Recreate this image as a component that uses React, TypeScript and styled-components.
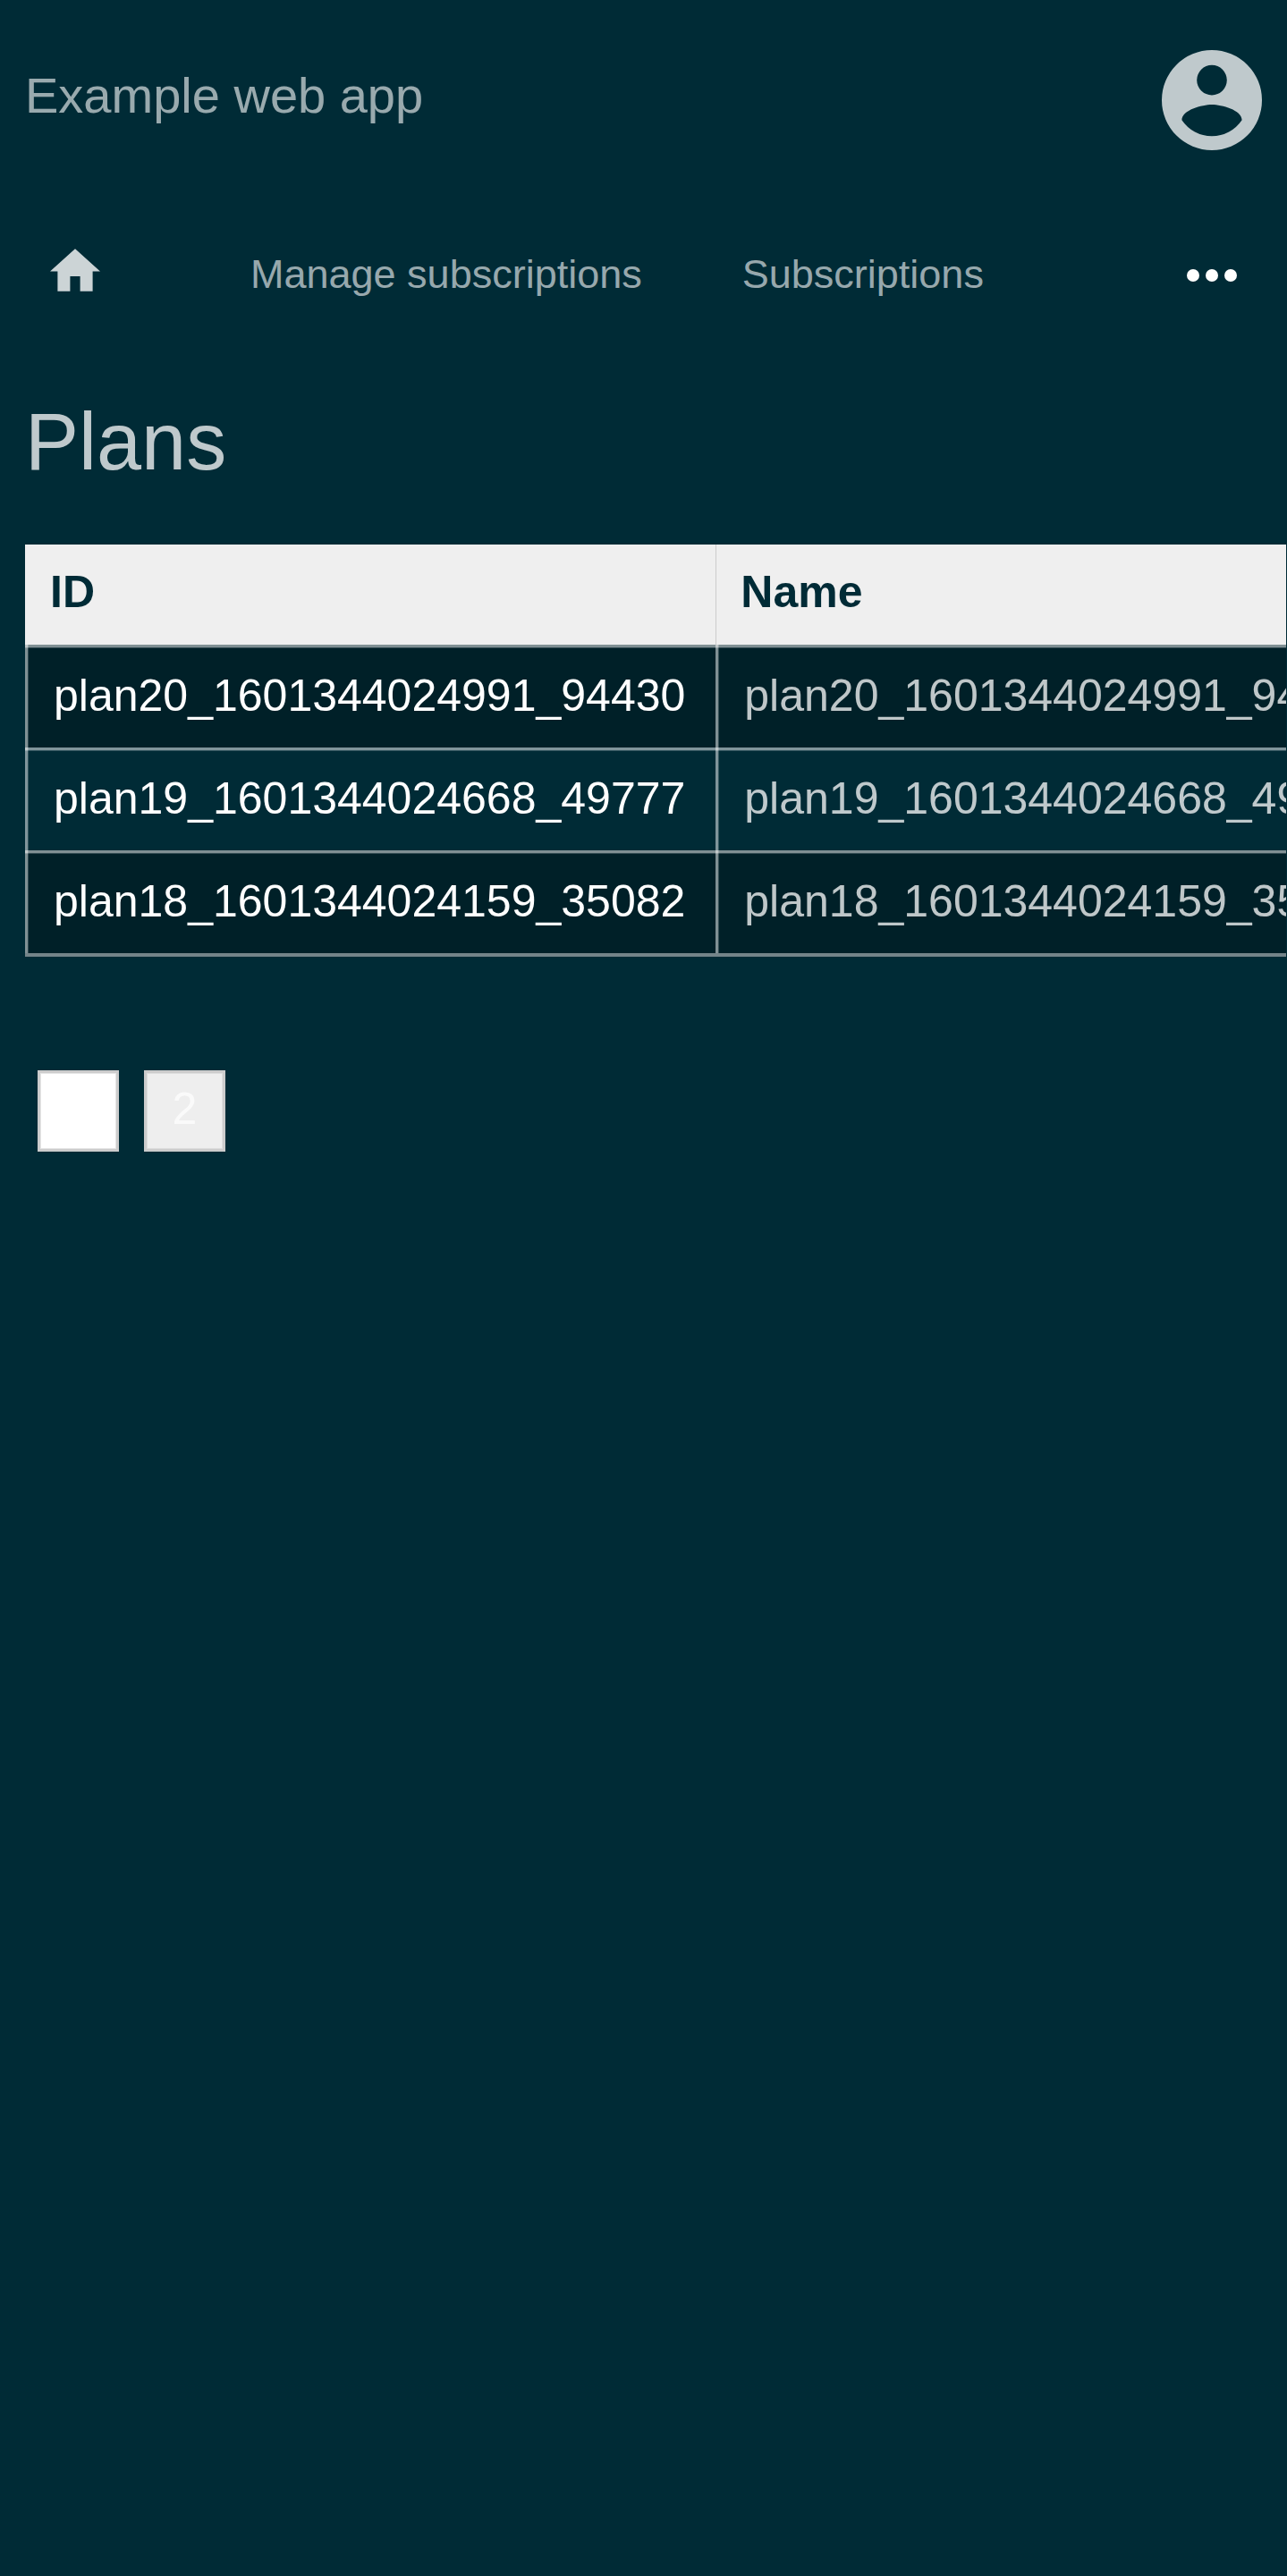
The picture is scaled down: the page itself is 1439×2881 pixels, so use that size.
import React from "react";
import styled, { createGlobalStyle } from "styled-components";

const GlobalStyle = createGlobalStyle`
  *, *::before, *::after { box-sizing: border-box; }
  body {
    margin: 0;
    background: #002b36;
    color: rgba(255, 255, 255, 0.75);
    font-family: "Liberation Sans", Arial, sans-serif;
    font-size: 50px;
  }
`;

const Page = styled.div`
  min-height: 100vh;
  overflow: hidden;
`;

const Header = styled.header`
  display: flex;
  align-items: center;
  justify-content: space-between;
  padding: 56px 28px;
`;

const SiteTitle = styled.a`
  padding-bottom: 10px;
  color: rgba(255, 255, 255, 0.6);
  font-size: 56px;
  line-height: 64px;
  text-decoration: none;
`;

const IconButton = styled.button`
  display: block;
  padding: 0;
  border: 0;
  background: none;
  color: inherit;
  cursor: pointer;

  svg { display: block; }
`;

const Nav = styled.nav`
  display: flex;
  align-items: center;
  height: 112px;
  margin-top: 28px;
  padding-right: 56px;
`;

const HomeLink = styled.a`
  width: 224px;
  padding: 0 56px 12px;
  color: rgba(255, 255, 255, 0.8);

  svg { display: block; }
`;

const NavLink = styled.a`
  padding: 0 56px 2px;
  color: rgba(255, 255, 255, 0.6);
  font-size: 45px;
  line-height: 52px;
  text-decoration: none;
  white-space: nowrap;
`;

const MoreButton = styled(IconButton)`
  margin-left: auto;
  color: #fff;
`;

const Main = styled.main`
  padding: 78px 1px 28px 28px;
`;

const Heading = styled.h1`
  margin: 0 0 63px;
  font-size: 90px;
  font-weight: 400;
  line-height: 104px;
`;

const TableScroll = styled.div`
  overflow: hidden;
`;

const Table = styled.table`
  border-spacing: 0;
  line-height: 56px;
  text-align: left;
  white-space: nowrap;
`;

const HeadCell = styled.th`
  padding: 25px 28px 31px;
  background: #efefef;
  color: #002b36;
  font-weight: 700;

  & + & { box-shadow: inset 1px 0 #ccc; }
`;

const Row = styled.tr`
  &:nth-child(odd) { background: rgba(0, 0, 0, 0.25); }
`;

/* Each grid line is a 3px bright stroke with a faint 1px inner edge;
   separate shadows let crossings add up to a brighter joint. */
const Cell = styled.td`
  padding: 29px 34px 30px 32px;
  box-shadow:
    inset 3px 0 rgba(255, 255, 255, 0.38),
    inset 4px 0 rgba(255, 255, 255, 0.2),
    inset 0 3px rgba(255, 255, 255, 0.38),
    inset 0 4px rgba(255, 255, 255, 0.2);

  tr:last-child > & { border-bottom: 4px solid rgba(255, 255, 255, 0.45); }
`;

const PlanLink = styled.a`
  color: #fff;
  text-decoration: none;
`;

const Pagination = styled.nav`
  display: flex;
  gap: 28px;
  margin-top: 127px;
  padding-left: 14px;
`;

const PageLink = styled.a<{ $current?: boolean }>`
  width: 91px;
  height: 91px;
  border: 3px solid #ccc;
  box-shadow: inset 0 0 0 1px rgba(204, 204, 204, 0.5);
  background: ${(p) => (p.$current ? "#fff" : "#eee")};
  color: ${(p) => (p.$current ? "#fff" : "#fafafa")};
  line-height: 80px;
  text-align: center;
  text-decoration: none;
`;

const plans = [
  "plan20_1601344024991_94430",
  "plan19_1601344024668_49777",
  "plan18_1601344024159_35082",
];

const HomeIcon = () => (
  <svg width="56" height="48" viewBox="2 3 20 17" fill="currentColor" aria-hidden="true">
    <path d="M10 20v-6h4v6h5v-8h3L12 3 2 12h3v8z" />
  </svg>
);

const AccountIcon = () => (
  <svg width="112" height="112" viewBox="0 0 20 20" fill="currentColor" aria-hidden="true">
    <path d="M10 0a10 10 0 1 0 0 20 10 10 0 0 0 0-20zm0 3a3 3 0 1 1 0 6 3 3 0 0 1 0-6zm0 14.2a7.2 7.2 0 0 1-6-3.22c.03-1.99 4-3.08 6-3.08s5.97 1.09 6 3.08a7.2 7.2 0 0 1-6 3.22z" />
  </svg>
);

const MoreIcon = () => (
  <svg width="56" height="14" viewBox="0 0 16 4" fill="currentColor" aria-hidden="true">
    <circle cx="2" cy="2" r="2" />
    <circle cx="8" cy="2" r="2" />
    <circle cx="14" cy="2" r="2" />
  </svg>
);

export default function App() {
  return (
    <>
      <GlobalStyle />
      <Page>
        <Header>
          <SiteTitle href="#">Example web app</SiteTitle>
          <IconButton type="button" aria-label="Account">
            <AccountIcon />
          </IconButton>
        </Header>
        <Nav aria-label="Main">
          <HomeLink href="#" aria-label="Home">
            <HomeIcon />
          </HomeLink>
          <NavLink href="#">Manage subscriptions</NavLink>
          <NavLink href="#">Subscriptions</NavLink>
          <MoreButton type="button" aria-label="More">
            <MoreIcon />
          </MoreButton>
        </Nav>
        <Main>
          <Heading>Plans</Heading>
          <TableScroll>
            <Table>
              <thead>
                <tr>
                  <HeadCell scope="col">ID</HeadCell>
                  <HeadCell scope="col">Name</HeadCell>
                </tr>
              </thead>
              <tbody>
                {plans.map((plan) => (
                  <Row key={plan}>
                    <Cell>
                      <PlanLink href="#">{plan}</PlanLink>
                    </Cell>
                    <Cell>{plan}</Cell>
                  </Row>
                ))}
              </tbody>
            </Table>
          </TableScroll>
          <Pagination aria-label="Pages">
            <PageLink href="#" $current aria-current="page">
              1
            </PageLink>
            <PageLink href="#">2</PageLink>
          </Pagination>
        </Main>
      </Page>
    </>
  );
}
